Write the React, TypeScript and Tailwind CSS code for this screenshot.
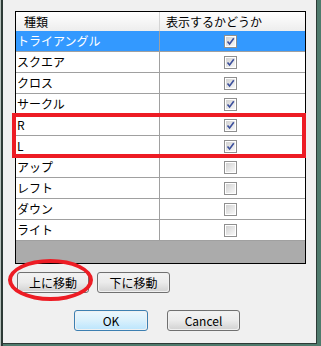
import React from "react";

type Row = { label: string; checked: boolean; selected?: boolean };

const rows: Row[] = [
  { label: "トライアングル", checked: true, selected: true },
  { label: "スクエア", checked: true },
  { label: "クロス", checked: true },
  { label: "サークル", checked: true },
  { label: "R", checked: true },
  { label: "L", checked: true },
  { label: "アップ", checked: false },
  { label: "レフト", checked: false },
  { label: "ダウン", checked: false },
  { label: "ライト", checked: false },
];

const Checkbox = ({ checked }: { checked: boolean }) => (
  <div className="w-[13px] h-[13px] border border-[#8f8f8f] bg-white p-px">
    <div className="w-full h-full bg-gradient-to-br from-[#d2d2d2] to-[#f8f8f8] relative">
      {checked && (
        <svg viewBox="0 0 9 9" className="absolute inset-0 w-[9px] h-[9px]">
          <path d="M1.5 4.5 L3.6 7 L7.8 1.2" fill="none" stroke="#3b4f9c" strokeWidth="1.6" />
        </svg>
      )}
    </div>
  </div>
);

const Button = ({ label, width, focused }: { label: string; width: string; focused?: boolean }) => (
  <div
    className={`${width} h-[21px] rounded-[3px] border ${
      focused ? "border-[#3c7fb1]" : "border-[#707070]"
    } p-px`}
  >
    <div
      className={`h-full rounded-[2px] flex items-center justify-center text-[12px] text-black bg-gradient-to-b ${
        focused
          ? "from-[#eaf6fd] via-[#d9f0fc] to-[#bee6fd]"
          : "from-[#f2f2f2] via-[#ebebeb] to-[#d4d4d4]"
      }`}
    >
      {label}
    </div>
  </div>
);

export default function App() {
  return (
    <div
      className="w-[321px] h-[346px] flex bg-[#4f7a6c] overflow-hidden"
      style={{ fontFamily: '"Noto Sans CJK JP", "Liberation Sans", sans-serif' }}
    >
      <div className="w-px bg-[#b4c0bb]" />
      <div className="w-[2px] bg-[#2d3a36]" />
      <div className="relative w-[314px] h-[344px] bg-[#f0f0f0] border-r border-b border-[#2d3a36] pt-[11px] pl-[12px] flex flex-col">
        {/* Grid */}
        <div className="w-[291px] h-[253px] border border-black bg-[#ababab] flex flex-col">
          {/* Header */}
          <div className="h-[19px] flex bg-gradient-to-b from-white to-[#ededed] text-[12px] text-black leading-none">
            <div className="w-[144px] border-r border-[#d5d5d5] flex items-center pl-[8px]">種類</div>
            <div className="flex-1 flex items-center pl-[6px]">表示するかどうか</div>
          </div>
          {/* Rows */}
          {rows.map((row, i) => (
            <div
              key={i}
              className={`h-[21px] flex border-b border-[#a0a0a0] text-[12px] leading-none ${
                row.selected ? "bg-[#3399ff] text-white" : "bg-white text-black"
              }`}
            >
              <div className="w-[144px] border-r border-[#a0a0a0] flex items-center pl-px">{row.label}</div>
              <div className="flex-1 flex items-center pl-[64px]">
                <Checkbox checked={row.checked} />
              </div>
            </div>
          ))}
        </div>

        {/* Move buttons */}
        <div className="flex gap-[8px] mt-[8px] ml-[2px]">
          <Button label="上に移動" width="w-[72px]" />
          <Button label="下に移動" width="w-[73px]" />
        </div>

        {/* OK / Cancel */}
        <div className="flex gap-[19px] mt-[17px] ml-[59px]">
          <Button label="OK" width="w-[74px]" focused />
          <Button label="Cancel" width="w-[73px]" />
        </div>

        {/* Red annotation overlays */}
        <div className="absolute left-[9px] top-[113px] w-[294px] h-[45px] border-[4px] border-[#ed1c24] pointer-events-none" />
        <div className="absolute left-[5px] top-[259px] w-[85px] h-[42px] rounded-[50%] border-[4px] border-[#ed1c24] pointer-events-none" />
      </div>
    </div>
  );
}
